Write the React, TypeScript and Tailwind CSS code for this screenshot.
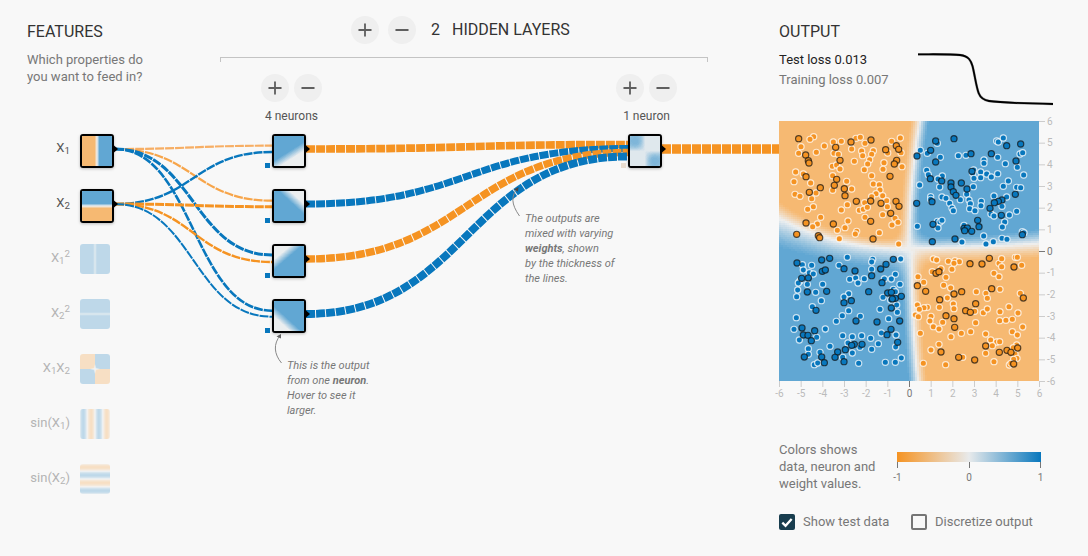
import React, { useMemo } from "react";
import { Plus, Minus } from "lucide-react";

const ORANGE = [245, 147, 34];
const MID = [232, 234, 235];
const BLUE = [8, 119, 189];
const A = 160 / 255;
const BG = 248;
const LEVELS = 48;

function levelColor(i: number) {
  const v = (i / (LEVELS - 1)) * 2 - 1;
  const from = v < 0 ? ORANGE : BLUE;
  const t = Math.abs(v);
  const c = MID.map((m, k) => m + (from[k] - m) * t).map((c) => Math.round(c * A + BG * (1 - A)));
  return `rgb(${c[0]},${c[1]},${c[2]})`;
}

function Heat({ fn, res, size }: { fn: (u: number, v: number) => number; res: number; size: number }) {
  const paths = useMemo(() => {
    const ds: string[] = Array(LEVELS).fill("");
    for (let r = 0; r < res; r++) {
      let start = 0;
      let cur = -1;
      for (let c = 0; c <= res; c++) {
        let l = -2;
        if (c < res) {
          const val = Math.max(-1, Math.min(1, fn((c + 0.5) / res, (r + 0.5) / res)));
          l = Math.round(((val + 1) / 2) * (LEVELS - 1));
        }
        if (l !== cur) {
          if (cur >= 0) ds[cur] += `M${start} ${r}h${c - start}v1h${start - c}z`;
          start = c;
          cur = l;
        }
      }
    }
    return ds;
  }, [fn, res]);
  return (
    <svg width={size} height={size} viewBox={`0 0 ${res} ${res}`} shapeRendering="crispEdges" className="block">
      {paths.map((d, i) => (d ? <path key={i} d={d} fill={levelColor(i)} /> : null))}
    </svg>
  );
}

const sat = (v: number) => Math.max(-1, Math.min(1, v));
const X = (u: number) => -6 + 12 * u;
const Y = (v: number) => 6 - 12 * v;
const fX1 = (u: number, _v: number) => sat(X(u));
const fX2 = (_u: number, v: number) => sat(Y(v));
const fX1s = (u: number, _v: number) => 0.5 + 0.5 * sat(X(u) ** 2 * 2);
const fX2s = (_u: number, v: number) => 0.5 + 0.5 * sat(Y(v) ** 2 * 2);
const fXY = (u: number, v: number) => sat(X(u) * Y(v) * 2.5);
const fS1 = (u: number, _v: number) => Math.sin(X(u));
const fS2 = (_u: number, v: number) => Math.sin(Y(v));

function ramp(x0: number, y0: number, x1: number, y1: number, width: number) {
  return (u: number, v: number) => {
    const nx = -(y1 - y0);
    const ny = x1 - x0;
    const len = Math.hypot(nx, ny);
    const d = ((u - x0) * nx + (v - y0) * ny) / len;
    return Math.max(0.02, Math.min(1, 0.5 + d / width));
  };
}
const fN1 = ramp(1, 0.35, 0.05, 0.95, 0.26);
const fN2 = ramp(0.35, 0, 1, 0.6, 0.26);
const fN3 = ramp(0, 0.62, 0.72, 0, 0.26);
const fN4 = ramp(0.72, 1, 0, 0.35, 0.26);
const fOut = (u: number, v: number) => {
  const a = 0.5 - u;
  const b = 0.5 - v;
  const edge = 1 - 0.35 * Math.max(0, Math.hypot(a, b) - 0.35) / 0.35;
  return 0.12 + Math.max(0, Math.tanh(5 * a) * Math.tanh(5 * b)) * 0.9 * edge;
};
const fMain = (u: number, v: number) => {
  const x = X(u);
  const y = Y(v);
  const x0 = y > 0 ? 0.5 * (y / 6) ** 2 : 0.1 + 0.3 * (y / 6) ** 2;
  const y0 = x < 0 ? 0.1 + 1.4 * Math.abs(x / 6) ** 2.2 : 0.15 + 0.2 * (x / 6) ** 2;
  const dy = y - y0;
  const kx = 1.9;
  let ky: number;
  if (x < 0) ky = dy > 0 ? 1.9 - 0.9 * (x / 6) ** 2 : 0.9 - 0.3 * (x / 6) ** 2;
  else ky = dy > 0 ? 1.7 - 0.5 * (x / 6) ** 2 : 1.2;
  return 1.5 * Math.tanh(kx * (x - x0)) * Math.tanh(ky * dy);
};

const TOP_O = [[131,380],[120,388],[93,410],[139,427],[86,430],[163,408],[190,396],[214,394],[258,385],[271,382],[285,400],[365,394],[391,384],[245,417],[192,430],[205,433],[275,423],[310,422],[305,433],[278,437],[353,429],[393,428],[253,454],[299,449],[293,462],[283,479],[342,458],[339,478],[396,470],[187,469],[200,465],[210,477],[77,486],[100,492],[72,515],[122,519],[188,497],[305,497],[230,514],[310,522],[328,524],[188,541],[245,537],[75,553],[90,559],[138,549],[125,566],[330,540],[318,551],[338,557],[305,560],[350,572],[284,578],[232,584],[130,590],[113,598],[214,600],[268,601],[280,598],[292,592],[338,614],[352,590],[375,625],[152,622],[285,622],[234,633],[142,642],[128,650],[225,653],[202,661],[260,664],[256,672],[366,645],[384,637],[328,668],[208,686],[386,702]];
const TOP_B = [[451,421],[472,430],[511,442],[565,437],[588,436],[642,450],[642,460],[683,442],[706,461],[680,393],[685,396],[700,384],[502,400],[750,432],[758,428],[742,472],[761,495],[470,481],[475,494],[517,498],[504,507],[611,480],[608,490],[632,486],[650,492],[664,501],[632,503],[683,491],[612,505],[715,513],[700,529],[740,532],[752,533],[449,525],[610,530],[509,531],[482,560],[482,568],[516,561],[528,565],[590,553],[571,569],[597,570],[601,581],[634,574],[633,587],[672,558],[710,561],[539,580],[546,594],[550,602],[599,596],[615,602],[696,589],[740,604],[663,612],[672,618],[718,615],[704,636],[502,634],[510,636],[516,631],[442,649],[504,654],[582,646],[641,678],[697,651],[757,665],[762,668],[670,695],[696,685],[711,688],[576,696],[648,702]];
const TOP_OD = [[86,386],[197,412],[243,396],[303,390],[347,419],[379,407],[386,418],[107,435],[115,452],[117,459],[210,451],[380,451],[373,462],[108,500],[360,499],[200,508],[193,526],[223,536],[151,533],[118,547],[225,557],[259,574],[302,573],[333,580],[378,574],[387,589],[362,610],[302,634],[108,639],[190,642],[80,673],[145,677],[149,683],[309,687]];
const TOP_BD = [[552,386],[497,393],[482,421],[441,438],[603,431],[664,431],[710,407],[752,402],[497,456],[738,453],[606,484],[481,506],[515,513],[543,519],[574,519],[543,531],[591,537],[550,545],[558,556],[736,553],[440,580],[486,575],[696,570],[685,574],[673,578],[660,595],[694,616],[623,631],[627,650],[489,643],[582,655],[592,654],[584,662],[605,664],[757,674],[487,695],[555,687]];
const LOW_B = [[97,44],[125,46],[232,22],[308,28],[392,27],[305,36],[207,46],[100,60],[118,68],[130,72],[305,58],[376,73],[90,93],[85,99],[112,103],[158,103],[239,88],[257,84],[264,99],[283,86],[343,87],[364,87],[390,103],[83,120],[80,140],[137,127],[236,131],[222,141],[154,152],[339,142],[370,118],[376,125],[362,150],[380,165],[127,170],[236,182],[330,178],[382,187],[217,197],[199,214],[271,199],[356,206],[79,203],[72,238],[166,237],[334,249],[378,255],[88,270],[140,262],[218,257],[247,260],[275,257],[302,265],[234,279],[270,292],[325,281],[377,291],[180,289],[115,296],[115,313],[150,307],[247,309],[305,298],[218,322],[346,337],[376,337],[394,324],[266,340],[133,344],[143,339]];
const LOW_BD = [[81,39],[155,30],[179,25],[370,28],[348,43],[332,57],[157,64],[166,60],[255,63],[222,56],[305,77],[95,85],[115,84],[336,98],[112,126],[170,124],[296,125],[353,129],[364,127],[376,145],[394,139],[367,147],[222,158],[244,152],[364,174],[138,181],[389,213],[321,216],[258,213],[96,234],[100,255],[114,256],[134,242],[124,272],[363,238],[351,254],[383,277],[253,283],[276,283],[245,286],[226,299],[203,306],[195,322],[155,321],[103,321],[163,338],[222,335]];
const LOW_O = [[490,27],[500,30],[535,34],[555,32],[568,35],[552,40],[687,40],[695,26],[736,22],[742,22],[695,50],[755,46],[487,65],[546,58],[513,56],[444,80],[528,82],[672,70],[687,80],[461,97],[521,106],[542,114],[690,118],[648,130],[652,145],[619,125],[751,130],[532,144],[442,165],[550,162],[552,176],[472,172],[462,173],[448,178],[508,172],[436,195],[445,200],[640,188],[652,177],[614,184],[690,185],[717,170],[744,189],[483,199],[480,213],[518,217],[490,230],[507,237],[617,218],[689,212],[708,211],[727,208],[758,231],[451,250],[574,250],[602,245],[727,245],[647,252],[742,255],[543,260],[662,270],[680,276],[689,275],[667,287],[507,283],[483,300],[647,310],[672,335],[460,340],[527,344],[578,322],[740,285],[730,293],[735,312],[741,325],[731,328],[718,345],[723,340]];
const LOW_OD = [[600,41],[636,42],[658,25],[732,51],[498,70],[507,65],[442,107],[467,124],[665,116],[552,132],[575,125],[509,149],[617,161],[760,144],[587,182],[601,187],[528,197],[552,206],[554,232],[647,288],[513,306],[688,307],[711,301],[723,307],[743,294],[566,322],[614,330],[731,342]];

function Dots({ pts, lower, fill, stroke, op }: { pts: number[][]; lower?: boolean; fill: string; stroke: string; op: number }) {
  return (
    <>
      {pts.map(([x, y], i) => (
        <circle key={i} cx={x / 3 - 9} cy={lower ? y / 3 + 129 : y / 3 - 111} r={3.1} fill={fill} stroke={stroke} strokeOpacity={op} strokeWidth={1.2} />
      ))}
    </>
  );
}

const O = "#f59322";
const B = "#0877bd";
const LO = "#f7ae64";

function diag(x0: number, y0: number, x1: number, y1: number) {
  const m = (x0 + x1) / 2;
  return `M${x0} ${y0}C${m} ${y0} ${m} ${y1} ${x1} ${y1}`;
}

const LINKS: [number, number, number, number, string, number][] = [
  [115, 149, 145.7, 0, LO, 2.2],
  [115, 149, 200.7, 0, "#f7a54a", 2.2],
  [115, 149, 255, 0, B, 3],
  [115, 149, 310.7, 0, B, 2.6],
  [115, 204, 152, 0, B, 2.4],
  [115, 204, 206.7, 0, O, 3],
  [115, 204, 262, 0, O, 2.4],
  [115, 204, 316.7, 0, B, 2],
  [306, 149, 144.5, 1, O, 7.7],
  [306, 204, 148.5, 1, B, 7],
  [306, 259, 152.5, 1, O, 7.4],
  [306, 314, 156.5, 1, B, 7.8],
];

function Links() {
  const tris = [[114, 149], [114, 204], [306, 149], [306, 204], [306, 259], [306, 314], [662, 149]];
  return (
    <svg width={1088} height={556} className="absolute inset-0 pointer-events-none">
      {LINKS.map(([x0, y0, y1, layer, c, w], i) => (
        <path key={i} d={diag(x0, y0, layer ? 628 : 272, y1)} fill="none" stroke={c} strokeWidth={w} strokeDasharray="9 1" />
      ))}
      <path d="M662 149H779" fill="none" stroke={O} strokeWidth={9.6} strokeDasharray="9 1" />
      {tris.map(([x, y], i) => (
        <path key={i} d={`M${x} ${y - 3.5}L${x + 4} ${y}L${x} ${y + 3.5}z`} fill="#000" />
      ))}
      <path d="M281.5 363C274 354 273 344 280.5 335" fill="none" stroke="#888" strokeWidth={1} />
      <path d="M281 334L276.5 336.5L281 338.5z" fill="#666" />
      <path d="M519.5 216C511 204 511 196 517.5 188" fill="none" stroke="#888" strokeWidth={1} />
      <path d="M518.5 187L514 189.5L518 191.5z" fill="#444" />
    </svg>
  );
}

function RoundBtn({ kind }: { kind: "plus" | "minus" }) {
  const Icon = kind === "plus" ? Plus : Minus;
  return (
    <div className="flex h-[28px] w-[28px] items-center justify-center rounded-full bg-[#efefef] text-[#5f5f5f]">
      <Icon size={20} strokeWidth={2.2} />
    </div>
  );
}

function Neuron({ fn, tick = "bg-[#0877bd]", className = "" }: { fn: (u: number, v: number) => number; tick?: string; className?: string }) {
  return (
    <div className={`relative h-[34px] w-[34px] shrink-0 ${className}`}>
      <div className={`absolute bottom-0 left-[-7px] h-[5px] w-[5px] ${tick}`} />
      <div className="h-[34px] w-[34px] overflow-hidden rounded-[3px] border-2 border-black bg-[#f8f8f8] shadow-[0_1px_3px_rgba(0,0,0,0.25)]">
        <Heat fn={fn} res={30} size={30} />
      </div>
    </div>
  );
}

function Feature({ label, fn, active }: { label: React.ReactNode; fn: (u: number, v: number) => number; active?: boolean }) {
  return (
    <div className="flex h-[34px] items-start">
      <div className={`flex h-[27px] w-[43px] items-center justify-end text-[13px] leading-none ${active ? "text-[#555]" : "text-[#b4b4b4]"}`}>
        <span>{label}</span>
      </div>
      {active ? (
        <div className="relative z-10 ml-[10px] h-[34px] w-[34px] overflow-hidden rounded-[3px] border-2 border-black shadow-[0_1px_3px_rgba(0,0,0,0.25)]">
          <Heat fn={fn} res={30} size={30} />
        </div>
      ) : (
        <div className="ml-[10px] h-[30px] w-[30px] overflow-hidden rounded-[3px] opacity-[0.38]">
          <Heat fn={fn} res={30} size={30} />
        </div>
      )}
    </div>
  );
}

function Note({ className, children }: { className: string; children: React.ReactNode }) {
  return <div className={`absolute text-[11px] italic leading-[15px] text-[#777] ${className}`}>{children}</div>;
}

function Axes() {
  const nums = [-6, -5, -4, -3, -2, -1, 0, 1, 2, 3, 4, 5, 6];
  return (
    <svg width={300} height={290} className="absolute left-0 top-0 overflow-visible pointer-events-none">
      {nums.map((n) => {
        const p = ((n + 6) / 12) * 260 + 0.5;
        const dark = n === 0;
        const line = dark ? "#777" : "#ccc";
        const txt = dark ? "#777" : "#bbb";
        return (
          <g key={n} fontSize={10} fontFamily="Roboto, sans-serif">
            <line x1={p} x2={p} y1={260} y2={266} stroke={line} />
            <line x1={260} x2={266} y1={260.5 - ((n + 6) / 12) * 260} y2={260.5 - ((n + 6) / 12) * 260} stroke={line} />
            <text x={p} y={276} textAnchor="middle" fill={txt}>{n}</text>
            <text x={268} y={263.5 - ((n + 6) / 12) * 260} fill={txt}>{n}</text>
          </g>
        );
      })}
    </svg>
  );
}

export default function App() {
  return (
    <div className="relative flex h-[556px] w-[1088px] overflow-hidden bg-[#f8f8f8] font-[Roboto,sans-serif]">
      <Links />

      {/* Features */}
      <div className="relative w-[220px] shrink-0 pl-[27px] pt-[23px]">
        <div className="text-[16px] leading-[18px] text-[#333]">FEATURES</div>
        <div className="mt-[10px] text-[13px] leading-[17px] text-[#777]">
          Which properties do
          <br />
          you want to feed in?
        </div>
        <div className="mt-[49px] flex flex-col gap-[21px]">
          <Feature active fn={fX1} label={<>X<sub>1</sub></>} />
          <Feature active fn={fX2} label={<>X<sub>2</sub></>} />
          <Feature fn={fX1s} label={<>X<sub>1</sub><sup>2</sup></>} />
          <Feature fn={fX2s} label={<>X<sub>2</sub><sup>2</sup></>} />
          <Feature fn={fXY} label={<>X<sub>1</sub>X<sub>2</sub></>} />
          <Feature fn={fS1} label={<>sin(X<sub>1</sub>)</>} />
          <Feature fn={fS2} label={<>sin(X<sub>2</sub>)</>} />
        </div>
      </div>

      {/* Network */}
      <div className="relative w-[488px] shrink-0 pt-[16px]">
        <div className="flex items-center pl-[131px]">
          <RoundBtn kind="plus" />
          <div className="ml-[9px]"><RoundBtn kind="minus" /></div>
          <span className="ml-[15px] text-[16px] leading-[18px] text-[#333]">2</span>
          <span className="ml-[12px] text-[16px] leading-[18px] text-[#333]">HIDDEN LAYERS</span>
        </div>
        <div className="mt-[13px] h-[5px] border-x border-t border-[#c4c4c4]" />
        <div className="mt-[12px] flex pl-[41px]">
          <div className="flex w-[61px] flex-col">
            <div className="flex gap-[5px]"><RoundBtn kind="plus" /><RoundBtn kind="minus" /></div>
            <div className="mt-[7px] whitespace-nowrap text-center text-[12px] leading-[14px] text-[#555]">4 neurons</div>
            <div className="mt-[11px] flex flex-col gap-[21px] pl-[11px]">
              <Neuron fn={fN1} />
              <Neuron fn={fN2} />
              <Neuron fn={fN3} />
              <Neuron fn={fN4} />
            </div>
          </div>
          <div className="ml-[294px] flex w-[61px] flex-col">
            <div className="flex gap-[5px]"><RoundBtn kind="plus" /><RoundBtn kind="minus" /></div>
            <div className="mt-[7px] whitespace-nowrap text-center text-[12px] leading-[14px] text-[#555]">1 neuron</div>
            <div className="mt-[11px] pl-[12px]">
              <Neuron fn={fOut} tick="bg-[#e8dccf]" />
            </div>
          </div>
        </div>
        <Note className="left-[67px] top-[358px] w-[110px]">
          This is the output
          <br />
          from one <b>neuron</b>.
          <br />
          Hover to see it
          <br />
          larger.
        </Note>
        <Note className="left-[305px] top-[211px] w-[110px]">
          The outputs are
          <br />
          mixed with varying
          <br />
          <b>weights</b>, shown
          <br />
          by the thickness of
          <br />
          the lines.
        </Note>
      </div>

      {/* Output */}
      <div className="relative ml-[71px] w-[300px] shrink-0 pt-[23px]">
        <div className="text-[16px] leading-[18px] text-[#333]">OUTPUT</div>
        <div className="mt-[9px] flex h-[71px]">
          <div className="w-[138px] text-[13px] leading-[20px]">
            <div className="text-[#222]">
              Test loss <span>0.013</span>
            </div>
            <div className="text-[#777]">
              Training loss <span>0.007</span>
            </div>
          </div>
          <svg width={137} height={60} className="block overflow-visible">
            <path d="M1 4.3C20 4.3 35 4 43 5C52 6 54 11 55.5 16C58 26 59 36 61.7 43.3C63.5 48 66 50 72 51C85 53 110 53.5 136 54" fill="none" stroke="#aaa" strokeWidth={2.6} />
            <path d="M1 4.3C20 4.3 35 4 43 5C52 6 54 11 55.5 16C58 26 59 36 61.7 43.3C63.5 48 66 50 72 51C85 53 110 53.5 136 54" fill="none" stroke="#000" strokeWidth={1.8} />
          </svg>
        </div>
        <div className="relative h-[260px] w-[260px]">
          <Heat fn={fMain} res={130} size={260} />
          <svg width={260} height={260} className="absolute left-0 top-0">
            <Dots pts={TOP_O} fill={O} stroke="#fff" op={0.75} />
            <Dots pts={TOP_B} fill={B} stroke="#fff" op={0.75} />
            <Dots pts={LOW_O} lower fill={O} stroke="#fff" op={0.75} />
            <Dots pts={LOW_B} lower fill={B} stroke="#fff" op={0.75} />
            <Dots pts={TOP_OD} fill={O} stroke="#111" op={0.7} />
            <Dots pts={TOP_BD} fill={B} stroke="#111" op={0.7} />
            <Dots pts={LOW_OD} lower fill={O} stroke="#111" op={0.7} />
            <Dots pts={LOW_BD} lower fill={B} stroke="#111" op={0.7} />
          </svg>
          <Axes />
        </div>
        <div className="mt-[61px] flex">
          <div className="w-[118px] text-[13px] leading-[16.8px] text-[#777]">
            Colors shows
            <br />
            data, neuron and
            <br />
            weight values.
          </div>
          <div className="mt-[10px] w-[144px]">
            <div className="h-[10px] bg-[linear-gradient(to_right,#f59322,#e8eaeb,#0877bd)]" />
            <div className="flex justify-between">
              <div className="flex w-px flex-col items-center"><div className="h-[6px] w-px shrink-0 bg-[#777]" /><span className="mt-[5px] text-[10px] leading-[10px] text-[#777]">-1</span></div>
              <div className="flex w-px flex-col items-center"><div className="h-[6px] w-px shrink-0 bg-[#777]" /><span className="mt-[5px] text-[10px] leading-[10px] text-[#777]">0</span></div>
              <div className="flex w-px flex-col items-center"><div className="h-[6px] w-px shrink-0 bg-[#777]" /><span className="mt-[5px] text-[10px] leading-[10px] text-[#777]">1</span></div>
            </div>
          </div>
        </div>
        <div className="mt-[22px] flex items-center text-[13px] leading-[16px] text-[#777]">
          <div className="flex h-[16px] w-[16px] items-center justify-center rounded-[2px] bg-[#183d4e]">
            <svg width={14} height={14} viewBox="0 0 24 24"><path d="M4 13l5.5 5.5L20 7" fill="none" stroke="#fff" strokeWidth={4} /></svg>
          </div>
          <span className="ml-[8px] w-[108px]">Show test data</span>
          <div className="h-[16px] w-[16px] rounded-[2px] border-2 border-[#757575]" />
          <span className="ml-[8px]">Discretize output</span>
        </div>
      </div>
    </div>
  );
}
